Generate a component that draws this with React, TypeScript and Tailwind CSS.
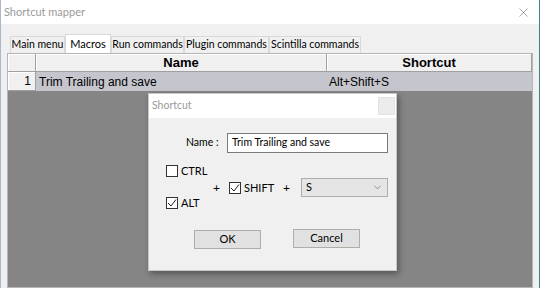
import { ChevronDown, X } from 'lucide-react';

const ui = { fontFamily: 'Lato, "Liberation Sans", sans-serif' };
const grid = { fontFamily: '"Liberation Sans", Arial, sans-serif' };

function Tab({ label, width, active }: { label: string; width: string; active?: boolean }) {
	return (
		<div
			className={
				active
					? `relative z-10 -mb-px flex h-[19px] ${width} items-center justify-center whitespace-nowrap border border-b-0 border-[#d9d9d9] bg-white text-[11px] text-black`
					: `mt-[2px] flex h-[17px] ${width} items-center justify-center whitespace-nowrap border border-b-0 border-[#d9d9d9] bg-[#f0f0f0] text-[10.5px] text-black`
			}
		>
			{label}
		</div>
	);
}

function Check({ checked, label }: { checked?: boolean; label: string }) {
	return (
		<div className="flex h-[14px] items-center gap-[3px]">
			<div className="flex h-[12px] w-[12px] items-center justify-center border border-[#333] bg-white">
				{checked && (
					<svg width="10" height="10" viewBox="0 0 10 10">
						<path d="M1 5 L4 8 L9 1.5" fill="none" stroke="#222" strokeWidth="1" />
					</svg>
				)}
			</div>
			<span className="text-[11px] text-black">{label}</span>
		</div>
	);
}

function Button({ label }: { label: string }) {
	return (
		<div className="flex h-[19px] w-[67px] items-center justify-center border border-[#adadad] bg-[#e1e1e1] text-[11px] text-black">
			{label}
		</div>
	);
}

export default function App() {
	return (
		<div
			className="relative flex h-[288px] w-[540px] flex-col overflow-hidden border-l border-r border-l-[#aab8c8] border-r-[#3f7f86] bg-white"
			style={ui}
		>
			{/* title bar */}
			<div className="flex h-[24px] items-center justify-between bg-white pl-[3px] pr-[8px]">
				<span className="text-[11px] text-[#9a9a9a]">Shortcut mapper</span>
				<X size={15} strokeWidth={1} className="text-[#777]" />
			</div>

			{/* body */}
			<div className="flex flex-1 flex-col bg-[#f0f0f0] pl-[6px] pr-[6px] pt-[10px]">
				<div className="flex pl-[3px]">
					<Tab label="Main menu" width="w-[55px]" />
					<Tab label="Macros" width="w-[46px]" active />
					<Tab label="Run commands" width="w-[73px]" />
					<Tab label="Plugin commands" width="w-[85px]" />
					<Tab label="Scintilla commands" width="w-[92px]" />
				</div>

				<div className="flex flex-1 flex-col border border-[#b5b5b5] bg-[#858585]" style={grid}>
					{/* header */}
					<div className="flex h-[18px] bg-[#f0f0f0] text-[13px] font-bold text-black">
						<div className="w-[28px] border-b border-r border-[#a0a0a0] shadow-[inset_1px_1px_0_#fff]" />
						<div className="flex w-[291px] items-center justify-center border-b border-r border-[#a0a0a0] shadow-[inset_1px_1px_0_#fff]">
							Name
						</div>
						<div className="flex flex-1 items-center justify-center border-b border-r border-[#a0a0a0] shadow-[inset_1px_1px_0_#fff]">
							Shortcut
						</div>
					</div>
					{/* row */}
					<div className="flex h-[19px] text-[12px] text-black">
						<div className="flex w-[28px] items-center justify-end border-b border-r border-[#a0a0a0] bg-[#f0f0f0] pr-[4px] shadow-[inset_1px_1px_0_#fff]">
							1
						</div>
						<div className="flex w-[291px] items-center bg-[#c5c5cd] pl-[3px]">Trim Trailing and save</div>
						<div className="flex flex-1 items-center bg-[#c5c5cd] pl-[2px]">Alt+Shift+S</div>
					</div>
				</div>
			</div>

			{/* dialog */}
			<div className="absolute left-[147px] top-[93px] flex h-[178px] w-[249px] flex-col border border-[#c8c8c8] bg-[#f0f0f0] shadow-[2px_3px_6px_rgba(0,0,0,0.35)]">
				<div className="flex h-[24px] items-center justify-between bg-white pl-[3px] pr-[1px]">
					<span className="text-[10.5px] text-[#9a9a9a]">Shortcut</span>
					<div className="h-[18px] w-[17px] border border-[#e3e3e3] bg-[#ececec]" />
				</div>

				<div className="flex flex-col pl-[17px] pr-[8px]">
					<div className="mt-[15px] flex items-center">
						<span className="ml-[20px] w-[41px] text-[10.5px] text-black">Name :</span>
						<div className="flex h-[20px] flex-1 items-center border border-[#7a7a7a] bg-white pl-[4px] text-[10.5px] text-black">
							Trim Trailing and save
						</div>
					</div>

					<div className="mt-[11px] flex">
						<div className="flex w-[47px] flex-col gap-[18px]">
							<Check label="CTRL" />
							<Check label="ALT" checked />
						</div>
						<div className="mt-[14px] flex flex-1 items-start">
							<span className="mt-[1px] w-[7px] text-[12px] text-black">+</span>
							<div className="ml-[9px] mt-[3px] w-[46px]">
								<Check label="SHIFT" checked />
							</div>
							<span className="ml-[8px] mt-[1px] w-[7px] text-[12px] text-black">+</span>
							<div className="ml-[11px] flex h-[19px] flex-1 items-center justify-between border border-[#adadad] bg-[#e5e5e5] pl-[4px] pr-[4px] text-[11px] text-black">
								S
								<ChevronDown size={11} strokeWidth={1.2} className="text-[#444]" />
							</div>
						</div>
					</div>

					<div className="mt-[20px] flex gap-[32px] pl-[28px]">
						<Button label="OK" />
						<div className="-mt-px">
							<Button label="Cancel" />
						</div>
					</div>
				</div>
			</div>
		</div>
	);
}
